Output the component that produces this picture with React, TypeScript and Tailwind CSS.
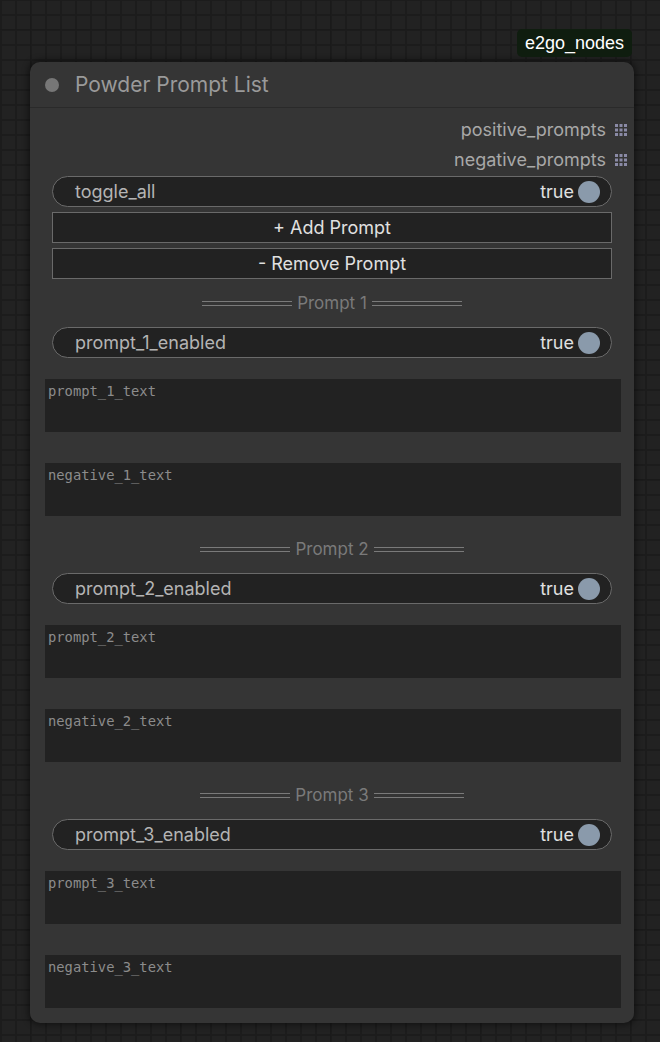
import { FC } from "react";

const GridDots: FC = () => (
    <svg width="12" height="12" viewBox="0 0 12 12" className="shrink-0">
        {[0, 4.5, 9].map((y) =>
            [0, 4.5, 9].map((x) => (
                <rect key={`${x}-${y}`} x={x} y={y} width="3" height="3" fill="#8a8aa6" />
            ))
        )}
    </svg>
);

const OutputRow: FC<{ label: string; className?: string }> = ({ label, className }) => (
    <div className={`flex h-[20px] items-center justify-end gap-[9px] pr-[7px] ${className ?? ""}`}>
        <span className="text-[18px] leading-none text-[#a8a8a8]">{label}</span>
        <GridDots />
    </div>
);

const Toggle: FC<{ label: string; className?: string }> = ({ label, className }) => (
    <div
        className={`mx-[22px] flex h-[31px] items-center rounded-full border border-[#6a6a6a] bg-[#222222] pl-[22px] pr-[11px] ${className ?? ""}`}
    >
        <span className="text-[18px] leading-none text-[#b4b4b4]">{label}</span>
        <span className="ml-auto text-[18px] leading-none text-[#e0e0e0]">true</span>
        <span className="ml-[4px] h-[22px] w-[22px] rounded-full bg-[#8a9aab]" />
    </div>
);

const ActionButton: FC<{ label: string; className?: string }> = ({ label, className }) => (
    <div
        className={`mx-[22px] flex h-[31px] items-center justify-center border border-[#6a6a6a] bg-[#222222] text-[18px] leading-none text-[#e0e0e0] ${className ?? ""}`}
    >
        {label}
    </div>
);

const Separator: FC<{ n: number; className?: string }> = ({ n, className }) => (
    <div className={`flex h-[20px] items-center justify-center gap-[5px] ${className ?? ""}`}>
        <span className="h-[5px] w-[90px] border-y border-[#7a7a7a]" />
        <span className="text-[17px] leading-none text-[#7a7a7a]">Prompt {n}</span>
        <span className="h-[5px] w-[90px] border-y border-[#7a7a7a]" />
    </div>
);

const TextBox: FC<{ placeholder: string; className?: string }> = ({ placeholder, className }) => (
    <div
        className={`ml-[15px] mr-[13px] h-[53px] bg-[#222222] px-[3px] pt-[4px] font-['DejaVu_Sans_Mono',monospace] text-[13.8px] leading-[16px] text-[#8c8c8c] ${className ?? ""}`}
    >
        {placeholder}
    </div>
);

const PromptSection: FC<{ n: number }> = ({ n }) => (
    <>
        <Separator n={n} className={n === 1 ? "mt-[14px]" : "mt-[23px]"} />
        <Toggle label={`prompt_${n}_enabled`} className="mt-[14px]" />
        <TextBox placeholder={`prompt_${n}_text`} className="mt-[21px]" />
        <TextBox placeholder={`negative_${n}_text`} className="mt-[31px]" />
    </>
);

const App: FC = () => {
    return (
        <div className="h-[1042px] w-[660px] overflow-hidden bg-[#222222] bg-[image:linear-gradient(90deg,#1a1a1a_1px,transparent_1px),linear-gradient(0deg,#1a1a1a_1px,transparent_1px),linear-gradient(90deg,#1c1c1c_2px,transparent_2px),linear-gradient(0deg,#1c1c1c_2px,transparent_2px)] bg-[size:150px_150px,150px_150px,15px_15px,15px_15px] bg-[position:30px_0,0_30px,0_0,0_1px] pl-[30px] pt-[29px] font-['Inter','Liberation_Sans',sans-serif]">
            <div className="flex w-[604px] justify-end pr-[2px]">
                <div className="flex h-[28px] items-center rounded-[5px] bg-[#0f1d0f] px-[8px] font-['Liberation_Sans',sans-serif] text-[18px] leading-none text-white">
                    e2go_nodes
                </div>
            </div>
            <div className="mt-[5px] flex w-[604px] flex-col rounded-[10px] bg-[#353535] shadow-[0_0_6px_2px_rgba(0,0,0,0.45)]">
                <div className="flex h-[46px] items-center border-b border-[#2a2a2a] pl-[15px]">
                    <span className="h-[14px] w-[14px] rounded-full bg-[#777777]" />
                    <span className="ml-[16px] text-[21px] leading-none text-[#9a9a9a]">Powder Prompt List</span>
                </div>
                <div className="flex flex-col pb-[15px] pt-[12px]">
                    <OutputRow label="positive_prompts" />
                    <OutputRow label="negative_prompts" className="mt-[10px]" />
                    <Toggle label="toggle_all" className="mt-[6px]" />
                    <ActionButton label="+ Add Prompt" className="mt-[5px]" />
                    <ActionButton label="- Remove Prompt" className="mt-[5px]" />
                    <PromptSection n={1} />
                    <PromptSection n={2} />
                    <PromptSection n={3} />
                </div>
            </div>
        </div>
    );
};

export default App;
